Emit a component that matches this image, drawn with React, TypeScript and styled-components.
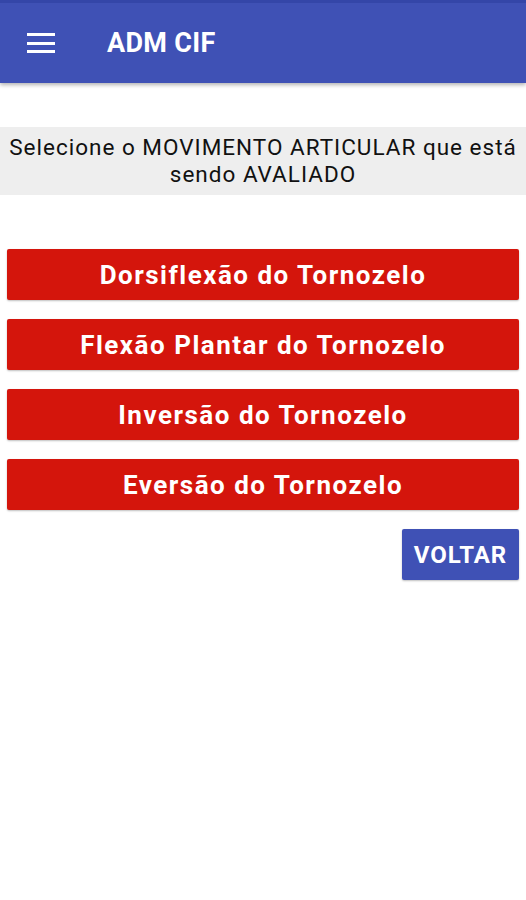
import React from "react";
import styled, { createGlobalStyle } from "styled-components";

const GlobalStyle = createGlobalStyle`
  html, body {
    margin: 0;
    padding: 0;
    background: #ffffff;
    font-family: Roboto, "Liberation Sans", sans-serif;
  }
`;

const Page = styled.div`
  width: 526px;
  min-height: 900px;
  background: #ffffff;
`;

const AppBar = styled.header`
  height: 83px;
  display: flex;
  align-items: center;
  padding: 0 0 0 27px;
  box-sizing: border-box;
  background-color: #3f51b5;
  border-top: 3px solid #3446a8;
  box-shadow: 0 2px 4px rgba(0, 0, 0, 0.3);
`;

const MenuButton = styled.div`
  width: 28px;
  height: 20px;
  display: flex;
  flex-direction: column;
  justify-content: space-between;
  margin-right: 52px;
  span {
    display: block;
    height: 3px;
    background: #ffffff;
  }
`;

const Title = styled.h1`
  margin: 0;
  color: #ffffff;
  font-size: 27px;
  font-weight: 700;
  letter-spacing: 0.3px;
`;

const Content = styled.main`
  display: flex;
  flex-direction: column;
  padding: 44px 7px 0;
`;

const Prompt = styled.div`
  background: #eeeeee;
  margin: 0 -7px;
  padding: 7px 0 7px;
  text-align: center;
  color: #111111;
  font-size: 22.5px;
  letter-spacing: 1px;
  line-height: 27px;
`;

const ButtonList = styled.div`
  display: flex;
  flex-direction: column;
  gap: 19px;
  margin-top: 54px;
`;

const MoveButton = styled.button`
  height: 51px;
  border: none;
  border-radius: 2px;
  background: #d4150c;
  color: #ffffff;
  font-family: Roboto, "Liberation Sans", sans-serif;
  font-size: 26px;
  font-weight: 700;
  letter-spacing: 1.5px;
  box-shadow: 0 1px 2px rgba(0, 0, 0, 0.25);
`;

const BackRow = styled.div`
  display: flex;
  justify-content: flex-end;
  margin-top: 19px;
`;

const BackButton = styled.button`
  width: 117px;
  height: 51px;
  border: none;
  border-radius: 2px;
  background: #3f51b5;
  color: #ffffff;
  font-family: Roboto, "Liberation Sans", sans-serif;
  font-size: 24px;
  font-weight: 700;
  letter-spacing: 1px;
  padding: 0;
  box-shadow: 0 1px 2px rgba(0, 0, 0, 0.25);
`;

const movements = [
  "Dorsiflexão do Tornozelo",
  "Flexão Plantar do Tornozelo",
  "Inversão do Tornozelo",
  "Eversão do Tornozelo",
];

const App = () => {
  return (
    <Page>
      <GlobalStyle />
      <AppBar>
        <MenuButton>
          <span />
          <span />
          <span />
        </MenuButton>
        <Title>ADM CIF</Title>
      </AppBar>
      <Content>
        <Prompt>
          Selecione o MOVIMENTO ARTICULAR que está
          <br />
          sendo AVALIADO
        </Prompt>
        <ButtonList>
          {movements.map((m) => (
            <MoveButton key={m}>{m}</MoveButton>
          ))}
        </ButtonList>
        <BackRow>
          <BackButton>VOLTAR</BackButton>
        </BackRow>
      </Content>
    </Page>
  );
};

export default App;
